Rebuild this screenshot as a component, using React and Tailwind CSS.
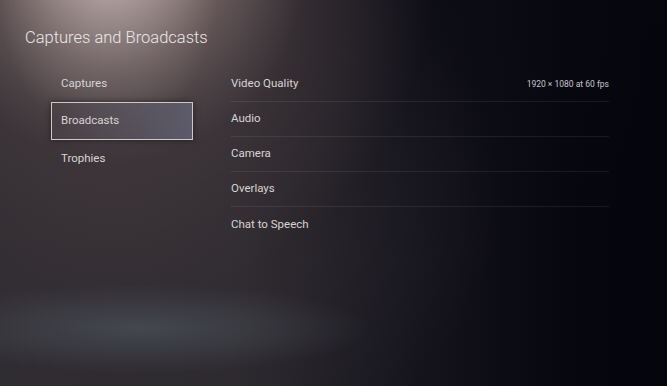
export default function App() {
  const left = ["Captures", "Broadcasts", "Trophies"];
  const rows = [
    { label: "Video Quality", value: "1920 × 1080 at 60 fps" },
    { label: "Audio" },
    { label: "Camera" },
    { label: "Overlays" },
    { label: "Chat to Speech" },
  ];

  return (
    <div
      className="relative w-[667px] h-[386px] overflow-hidden text-[#d8d4d4] bg-[linear-gradient(90deg,#2c2a30_0%,#2a282e_35%,#15141c_62%,#07070f_85%,#04040d_100%)]"
      style={{ fontFamily: "Roboto, 'Open Sans', sans-serif" }}
    >
      {/* background lights */}
      <div className="absolute inset-0 bg-[linear-gradient(180deg,rgba(8,8,16,0.45)_0%,rgba(8,8,16,0.15)_40%,rgba(8,8,16,0)_70%)]" />
      <div className="absolute inset-0 bg-[radial-gradient(ellipse_320px_340px_at_115px_-40px,rgba(205,186,182,1),rgba(150,128,126,0.75)_30%,rgba(90,76,78,0.4)_60%,rgba(40,36,40,0)_100%)]" />
      <div className="absolute inset-0 bg-[radial-gradient(ellipse_110px_150px_at_108px_-10px,rgba(220,205,202,0.55),rgba(200,180,178,0)_100%)]" />
      <div className="absolute inset-0 bg-[radial-gradient(ellipse_380px_300px_at_120px_200px,rgba(60,52,56,0.6),rgba(40,36,42,0)_100%)]" />
      <div className="absolute inset-0 bg-[radial-gradient(ellipse_230px_45px_at_140px_328px,rgba(78,86,94,0.65),rgba(60,64,72,0)_100%)]" />

      <div className="relative flex flex-col">
        <h1 className="pl-[25px] pt-[26px] text-[16.5px] leading-[24px] font-light text-[#ece8e8]">
          Captures and Broadcasts
        </h1>

        <div className="flex pt-[15px]">
          <div className="ml-[51px] w-[142px] flex flex-col">
            {left.map((item) =>
              item === "Broadcasts" ? (
                <div
                  key={item}
                  className="h-[38px] flex items-center pl-[9px] text-[11.5px] border border-[#cfc8c8] bg-[linear-gradient(100deg,rgba(72,64,66,0.6),rgba(100,100,118,0.8))] shadow-[0_0_6px_rgba(0,0,0,0.5)]"
                >
                  {item}
                </div>
              ) : (
                <div key={item} className="h-[37px] flex items-center pl-[10px] text-[11.5px]">
                  {item}
                </div>
              )
            )}
          </div>

          <div className="ml-[38px] mt-[2px] w-[378px] flex flex-col">
            {rows.map((r, i) => (
              <div
                key={r.label}
                className={`h-[35px] flex items-center justify-between ${
                  i < rows.length - 1 ? "border-b border-[rgba(255,255,255,0.08)]" : ""
                }`}
              >
                <span className="text-[11.5px]">{r.label}</span>
                {r.value && <span className="text-[8.5px] text-[#c8c6cc]">{r.value}</span>}
              </div>
            ))}
          </div>
        </div>
      </div>
    </div>
  );
}
